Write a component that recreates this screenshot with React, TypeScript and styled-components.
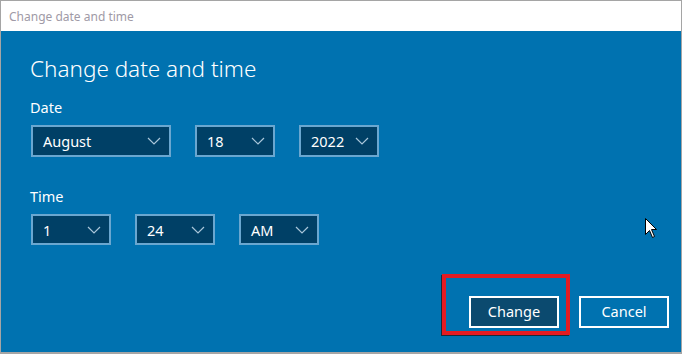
import React from 'react';
import styled, { createGlobalStyle } from 'styled-components';

const GlobalStyle = createGlobalStyle`
  html, body {
    margin: 0;
    padding: 0;
    width: 682px;
    height: 354px;
    overflow: hidden;
    font-family: "Segoe UI", "Noto Sans", "Liberation Sans", sans-serif;
  }
`;

const Window = styled.div`
  box-sizing: border-box;
  width: 682px;
  height: 354px;
  border: 1px solid #a5a5a5;
  border-bottom-width: 2px;
  display: flex;
  flex-direction: column;
  background: #0072b0;
  position: relative;
`;

const TitleBar = styled.div`
  height: 30px;
  background: #ffffff;
  display: flex;
  align-items: center;
  padding-left: 8px;
  font-size: 12px;
  color: #a09aa6;
`;

const Body = styled.div`
  flex: 1;
  display: flex;
  flex-direction: column;
  padding: 22px 0 0 29px;
  color: #ffffff;
`;

const Heading = styled.h1`
  margin: 0;
  font-weight: 300;
  font-size: 22.5px;
  line-height: 32px;
`;

const Label = styled.div<{ $top: number }>`
  font-size: 14.5px;
  line-height: 20px;
  margin-top: ${({ $top }) => $top}px;
`;

const SelectRow = styled.div`
  display: flex;
  gap: 24px;
  margin-top: 8px;
  margin-left: 1px;
`;

const Select = styled.div<{ $w: number; $h: number }>`
  box-sizing: border-box;
  width: ${({ $w }) => $w}px;
  height: ${({ $h }) => $h}px;
  background: #004066;
  border: 2px solid #6aa7d0;
  display: flex;
  align-items: center;
  justify-content: space-between;
  padding: 0 8px 0 10px;
  font-size: 14.5px;
  color: #ffffff;
`;

const Chevron = () => (
  <svg width="14" height="8" viewBox="0 0 14 8">
    <path d="M1 1 L7 7 L13 1" fill="none" stroke="#a9c6da" strokeWidth="1.2" />
  </svg>
);

const Footer = styled.div`
  margin-top: auto;
  display: flex;
  justify-content: flex-end;
  gap: 20px;
  padding: 0 12px 24px 0;
`;

const Marked = styled.div`
  position: relative;
  display: flex;
`;

const Highlight = styled.div`
  position: absolute;
  left: -27px;
  top: -22px;
  right: -11px;
  bottom: -7px;
  border: 4px solid #e31b23;
  box-shadow: -1px 1px 0 #1a2a3a;
  pointer-events: none;
`;

const Button = styled.button<{ $primary?: boolean }>`
  box-sizing: border-box;
  width: 90px;
  height: 32px;
  border: 2px solid #ffffff;
  background: ${({ $primary }) => ($primary ? '#0b4a6f' : '#0072b0')};
  color: #ffffff;
  font-family: inherit;
  font-size: 14.5px;
  padding: 0 0 2px 0;
`;

const Cursor = styled.svg`
  position: absolute;
  left: 644px;
  top: 217px;
`;

const selects = (items: { v: string; w: number }[], h: number) =>
  items.map((it) => (
    <Select key={it.v} $w={it.w} $h={h}>
      <span>{it.v}</span>
      <Chevron />
    </Select>
  ));

export default function App() {
  return (
    <>
      <GlobalStyle />
      <Window>
        <TitleBar>Change date and time</TitleBar>
        <Body>
          <Heading>Change date and time</Heading>
          <Label $top={12}>Date</Label>
          <SelectRow>
            {selects(
              [
                { v: 'August', w: 140 },
                { v: '18', w: 80 },
                { v: '2022', w: 80 },
              ],
              32
            )}
          </SelectRow>
          <Label $top={29}>Time</Label>
          <SelectRow>
            {selects(
              [
                { v: '1', w: 80 },
                { v: '24', w: 80 },
                { v: 'AM', w: 80 },
              ],
              31
            )}
          </SelectRow>
          <Footer>
            <Marked>
              <Button $primary>Change</Button>
              <Highlight />
            </Marked>
            <Button>Cancel</Button>
          </Footer>
        </Body>
        <Cursor width="13" height="21" viewBox="0 0 13 21">
          <path
            d="M0.5 0.5 L0.5 16.5 L4.5 12.5 L7.5 19.5 L9.5 18.5 L6.5 11.5 L11.5 11.5 Z"
            fill="#ffffff"
            stroke="#000000"
            strokeWidth="1"
          />
        </Cursor>
      </Window>
    </>
  );
}
